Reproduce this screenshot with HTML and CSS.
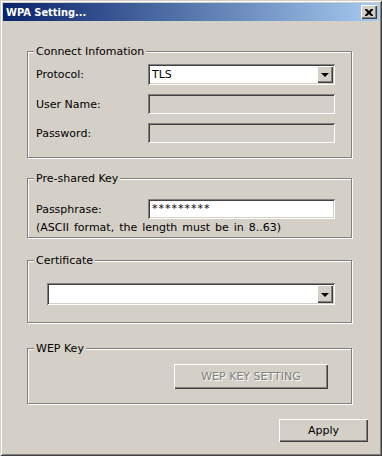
FILE: index.html
```html
<!DOCTYPE html>
<html lang="en">
<head>
  <meta charset="UTF-8" />
  <title>WPA Setting...</title>
  <link rel="stylesheet" href="styles.css">
</head>
<body>
  <div class="window">
    <div class="titlebar">
      <span class="title">WPA Setting...</span>
      <button class="close-btn" type="button">
        <svg width="8" height="7" viewBox="0 0 8 7"><path d="M0 0h2l2 2 2-2h2v1l-2.5 2.5L8 6v1H6L4 5 2 7H0V6l2.5-2.5L0 1z" fill="#000"/></svg>
      </button>
    </div>

    <div class="content">
      <!-- Connect information -->
      <fieldset class="group" id="connect-group">
        <legend>Connect Infomation</legend>
        <div class="row">
          <label>Protocol:</label>
          <div class="combo">
            <span class="combo-text">TLS</span>
            <span class="combo-btn"><span class="arrow"></span></span>
          </div>
        </div>
        <div class="row">
          <label>User Name:</label>
          <div class="field disabled"></div>
        </div>
        <div class="row">
          <label>Password:</label>
          <div class="field disabled"></div>
        </div>
      </fieldset>

      <!-- Pre-shared key -->
      <fieldset class="group" id="psk-group">
        <legend>Pre-shared Key</legend>
        <div class="row">
          <label>Passphrase:</label>
          <div class="field"><span class="stars">*********</span></div>
        </div>
        <p class="note">(ASCII format, the length must be in 8..63)</p>
      </fieldset>

      <!-- Certificate -->
      <fieldset class="group" id="cert-group">
        <legend>Certificate</legend>
        <div class="combo wide">
          <span class="combo-text"></span>
          <span class="combo-btn"><span class="arrow"></span></span>
        </div>
      </fieldset>

      <!-- WEP key -->
      <fieldset class="group" id="wep-group">
        <legend>WEP Key</legend>
        <button class="btn btn-disabled" type="button">WEP KEY SETTING</button>
      </fieldset>

      <div class="footer">
        <button class="btn btn-apply" type="button">Apply</button>
      </div>
    </div>
  </div>
</body>
</html>
```

FILE: styles.css
```css
/* Reset & Basic */
* {
  box-sizing: border-box;
}
body {
  margin: 0;
  font-family: "DejaVu Sans", Verdana, sans-serif;
  font-size: 11px;
  color: #000;
  background: #d4d0c8;
}

/* window frame */
.window {
  width: 382px;
  height: 456px;
  padding: 3px;
  background: #d4d0c8;
  box-shadow: inset 1px 1px 0 #d4d0c8, inset -1px -1px 0 #404040,
              inset 2px 2px 0 #fff, inset -2px -2px 0 #808080;
}

.titlebar {
  height: 18px;
  display: flex;
  align-items: center;
  justify-content: space-between;
  padding: 0 2px 0 3px;
  background: linear-gradient(to right, #0a246a, #a6caf0);
}
.title {
  color: #fff;
  font-family: "DejaVu Sans Condensed", "DejaVu Sans", sans-serif;
  font-weight: bold;
  font-size: 11px;
  line-height: 13px;
}
.close-btn {
  width: 16px;
  height: 14px;
  padding: 0;
  margin: 0;
  border: none;
  background: #d4d0c8;
  display: flex;
  align-items: center;
  justify-content: center;
  box-shadow: inset 1px 1px 0 #fff, inset -1px -1px 0 #404040, inset -2px -2px 0 #808080;
}

.content {
  padding: 0 27px 0 24px;
}

/* group boxes */
.group {
  margin: 0;
  border: 1px solid #808080;
  box-shadow: 1px 1px 0 #fff, inset 1px 1px 0 #fff;
  padding: 0 16px 0 8px;
  min-width: 0;
}
.group legend {
  padding: 0 2px;
  margin-left: -2px;
  line-height: 13px;
  background: #d4d0c8;
}

#connect-group {
  margin-top: 24px;
  padding-top: 6px;
  padding-bottom: 14px;
}
#psk-group {
  margin-top: 14px;
  padding-top: 14px;
  padding-bottom: 3px;
}
#psk-group .row {
  margin-bottom: 0;
}
#cert-group {
  margin-top: 16px;
  padding-top: 16px;
  padding-bottom: 17px;
}
#wep-group {
  margin-top: 19px;
  padding-top: 9px;
  padding-bottom: 14px;
  display: flex;
  justify-content: flex-end;
}

.row {
  display: flex;
  align-items: center;
  margin-bottom: 9px;
}
.row:last-child {
  margin-bottom: 0;
}
.row label {
  width: 112px;
  flex-shrink: 0;
}

/* sunken edit fields */
.field, .combo {
  width: 187px;
  height: 20px;
  background: #fff;
  box-shadow: inset 1px 1px 0 #808080, inset -1px -1px 0 #fff,
              inset 2px 2px 0 #404040, inset -2px -2px 0 #d4d0c8;
}
.field.disabled {
  background: #d4d0c8;
}
.stars {
  display: block;
  padding: 4px 0 0 4px;
  line-height: 11px;
  font-size: 11px;
  letter-spacing: 1px;
  color: #000;
}

.combo {
  height: 21px;
  display: flex;
  align-items: center;
  padding: 2px;
}
.combo.wide {
  width: 288px;
  height: 22px;
  margin-left: 11px;
}
.combo-text {
  flex: 1;
  padding-left: 2px;
  line-height: 13px;
}
.combo-btn {
  width: 16px;
  height: 100%;
  background: #d4d0c8;
  display: flex;
  align-items: center;
  justify-content: center;
  box-shadow: inset 1px 1px 0 #fff, inset -1px -1px 0 #404040, inset -2px -2px 0 #808080;
}
.arrow {
  width: 0;
  height: 0;
  border-left: 4px solid transparent;
  border-right: 4px solid transparent;
  border-top: 4px solid #000;
  margin-top: 1px;
}

.note {
  margin: 2px 0 0;
  line-height: 13px;
  word-spacing: 1.5px;
}

/* push buttons */
.btn {
  font-family: inherit;
  font-size: 11px;
  border: none;
  padding: 0;
  background: #d4d0c8;
  box-shadow: inset 1px 1px 0 #fff, inset -1px -1px 0 #404040, inset -2px -2px 0 #808080;
}
.btn-disabled {
  width: 154px;
  height: 25px;
  margin-right: 7px;
  color: #808080;
  text-shadow: 1px 1px 0 #fff;
}
.footer {
  display: flex;
  justify-content: flex-end;
  padding-top: 15px;
  margin-right: -16px;
}
.btn-apply {
  width: 89px;
  height: 23px;
}
```
